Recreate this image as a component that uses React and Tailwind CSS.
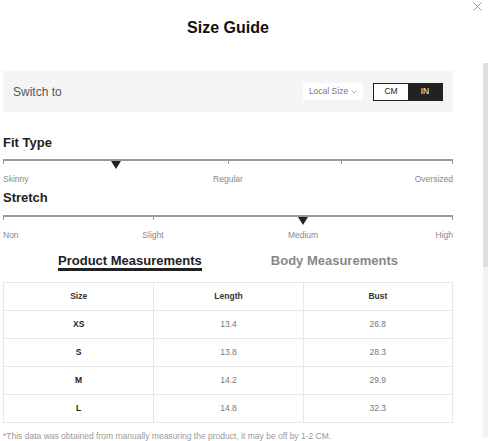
import React from 'react'

const rows = [
  { size: 'XS', length: '13.4', bust: '26.8' },
  { size: 'S', length: '13.8', bust: '28.3' },
  { size: 'M', length: '14.2', bust: '29.9' },
  { size: 'L', length: '14.8', bust: '32.3' },
]

function Scale({ ticks, marker, labels }) {
  return (
    <div>
      <div className="relative h-[2px] bg-[#9a9a9a]">
        {ticks.map((t) => (
          <span
            key={t}
            className="absolute top-0 w-px h-[5px] bg-[#9a9a9a]"
            style={{ left: t === 100 ? 'calc(100% - 1px)' : `${t}%` }}
          />
        ))}
        <svg
          className="absolute top-[2px] -translate-x-1/2"
          style={{ left: `${marker}%` }}
          width="10"
          height="8"
          viewBox="0 0 10 8"
        >
          <polygon points="0,0 10,0 5,8" fill="#222" />
        </svg>
      </div>
      <div className="relative h-[12px] mt-[12px] text-[8.5px] leading-[12px] text-[#888]">
        {labels.map((l, i) => (
          <span
            key={l.text}
            className={
              i === 0
                ? 'absolute left-0'
                : i === labels.length - 1
                ? 'absolute right-0'
                : 'absolute -translate-x-1/2'
            }
            style={i > 0 && i < labels.length - 1 ? { left: `${l.at}%` } : undefined}
          >
            {l.text}
          </span>
        ))}
      </div>
    </div>
  )
}

export default function App() {
  return (
    <div className="relative w-[488px] h-[441px] overflow-hidden bg-white font-['Liberation_Sans',Arial,sans-serif]">
      {/* close */}
      <svg className="absolute top-[2px] right-[6px]" width="9" height="9" viewBox="0 0 9 9">
        <path d="M0.5 0.5 L8.5 8.5 M8.5 0.5 L0.5 8.5" stroke="#999" strokeWidth="1" />
      </svg>

      <div className="flex">
        <div className="w-[450px] ml-[3px]">
          <h1 className="pt-[18px] text-center text-[16px] leading-[20px] font-bold text-[#111]">
            Size Guide
          </h1>

          <div className="mt-[33px] h-[41px] bg-[#f5f5f5] flex items-center pl-[10px] pr-[10px]">
            <span className="text-[12px] text-[#555]">Switch to</span>
            <div className="ml-auto flex items-center gap-[10px]">
              <div className="h-[17px] w-[60px] bg-white flex items-center justify-center gap-[3px] text-[8.5px] text-[#777]">
                Local Size
                <svg width="6" height="4" viewBox="0 0 6 4">
                  <path d="M0.5 0.5 L3 3 L5.5 0.5" fill="none" stroke="#999" strokeWidth="0.8" />
                </svg>
              </div>
              <div className="flex h-[18px] w-[70px] border border-[#222] text-[8.5px]">
                <div className="flex-1 flex items-center justify-center bg-white text-[#222]">CM</div>
                <div className="flex-1 flex items-center justify-center bg-[#222] text-white">IN</div>
              </div>
            </div>
          </div>

          <h2 className="mt-[23px] text-[13px] leading-[16px] font-bold text-[#222]">Fit Type</h2>
          <div className="mt-[8px]">
            <Scale
              ticks={[0, 50, 75, 100]}
              marker={25}
              labels={[
                { text: 'Skinny' },
                { text: 'Regular', at: 50 },
                { text: 'Oversized' },
              ]}
            />
          </div>

          <h2 className="mt-[5px] text-[13px] leading-[16px] font-bold text-[#222]">Stretch</h2>
          <div className="mt-[9px]">
            <Scale
              ticks={[0, 33.33, 66.67, 100]}
              marker={66.67}
              labels={[
                { text: 'Non' },
                { text: 'Slight', at: 33.33 },
                { text: 'Medium', at: 66.67 },
                { text: 'High' },
              ]}
            />
          </div>

          <div className="mt-[13px] flex justify-center gap-[69px] text-[13px] font-bold">
            <span className="leading-[14px] border-b-[3px] border-[#222] text-[#222]">Product Measurements</span>
            <span className="leading-[14px] text-[#888]">Body Measurements</span>
          </div>

          <div className="mt-[11px] border border-[#e8e8e8] text-[8.5px]">
            <div className="grid grid-cols-3 h-[28px] border-b border-[#e8e8e8] font-bold text-[#333]">
              <div className="flex items-center justify-center">Size</div>
              <div className="flex items-center justify-center border-l border-[#e8e8e8]">Length</div>
              <div className="flex items-center justify-center border-l border-[#e8e8e8]">Bust</div>
            </div>
            {rows.map((r, i) => (
              <div
                key={r.size}
                className={`grid grid-cols-3 ${i < rows.length - 1 ? 'h-[28px] border-b border-[#e8e8e8]' : 'h-[27px]'}`}
              >
                <div className="flex items-center justify-center font-bold text-[#222]">{r.size}</div>
                <div className="flex items-center justify-center border-l border-[#e8e8e8] text-[#777]">{r.length}</div>
                <div className="flex items-center justify-center border-l border-[#e8e8e8] text-[#777]">{r.bust}</div>
              </div>
            ))}
          </div>

          <p className="mt-[7px] text-[8.5px] leading-[12px] text-[#999]">
            *This data was obtained from manually measuring the product, it may be off by 1-2 CM.
          </p>
        </div>

        {/* scrollbar */}
        <div className="ml-[30px] mt-[63px] w-[5px] h-[374px] bg-[#f2f2f2]">
          <div className="h-[204px] bg-[#e0e0e0]" />
        </div>
      </div>
    </div>
  )
}
